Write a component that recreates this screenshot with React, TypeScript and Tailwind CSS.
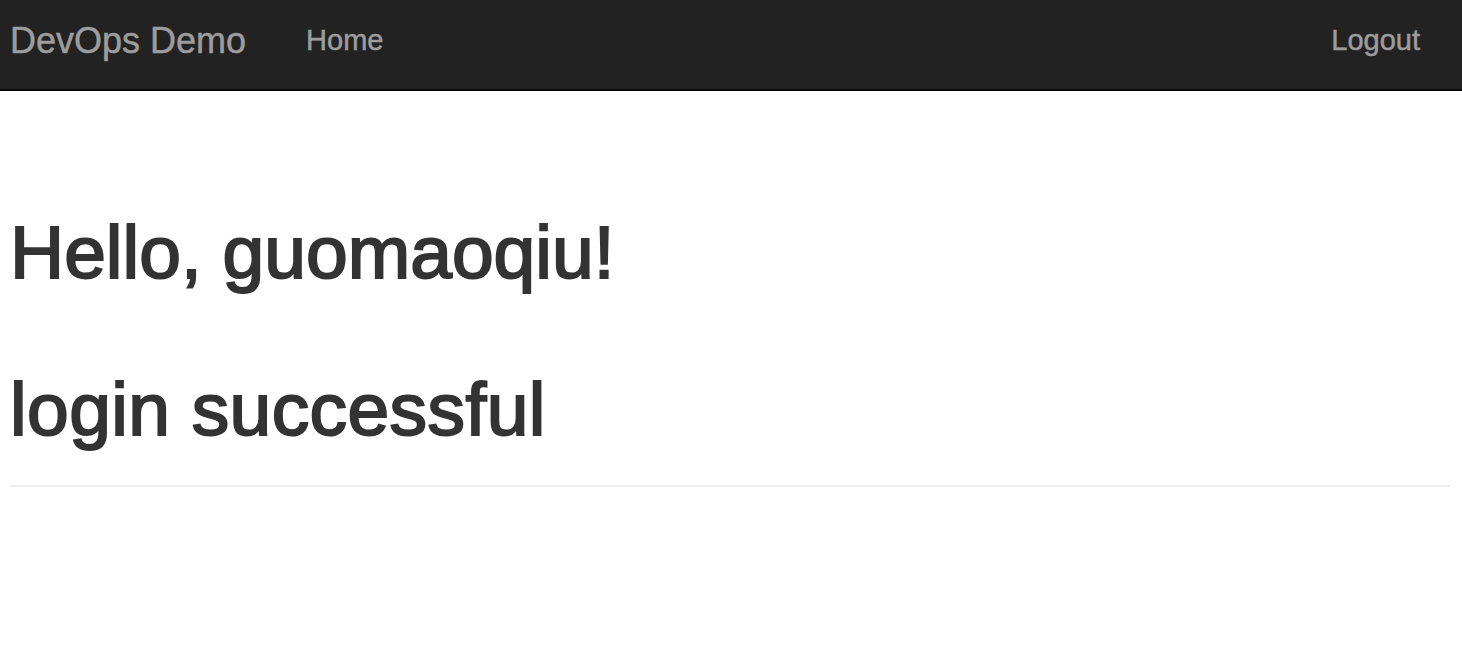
import React from 'react';

// Top bar: brand, nav link on the left, logout on the right
const Navbar: React.FC = () => (
  <nav className="flex h-[91px] items-start justify-between border-b-2 border-[#080808] bg-[#222222] font-['Liberation_Sans',Arial,sans-serif] [-webkit-text-stroke:0.5px_#9d9d9d]">
    <div className="flex items-start">
      <a href="#" className="pl-[10px] pt-[23px] text-[36px] leading-none text-[#9d9d9d]">
        DevOps Demo
      </a>
      <a href="#" className="ml-[60px] pt-[26px] text-[29px] leading-none text-[#9d9d9d]">
        Home
      </a>
    </div>
    <a href="#" className="pr-[42px] pt-[26px] text-[29px] leading-none text-[#9d9d9d]">
      Logout
    </a>
  </nav>
);

export default function App() {
  return (
    <div className="min-h-screen bg-white font-['Liberation_Sans',Arial,sans-serif]">
      <Navbar />
      <main className="px-[10px] pr-[12px]">
        <h1 className="mt-[124px] text-[75px] leading-none text-[#333333] [-webkit-text-stroke:2px_#333333]">
          Hello, guomaoqiu!
        </h1>
        <h1 className="mt-[82px] text-[75px] leading-none tracking-[0.4px] text-[#333333] [-webkit-text-stroke:2px_#333333]">
          login successful
        </h1>
        <hr className="mt-[38px] border-t-2 border-[#eeeeee]" />
      </main>
    </div>
  );
}
